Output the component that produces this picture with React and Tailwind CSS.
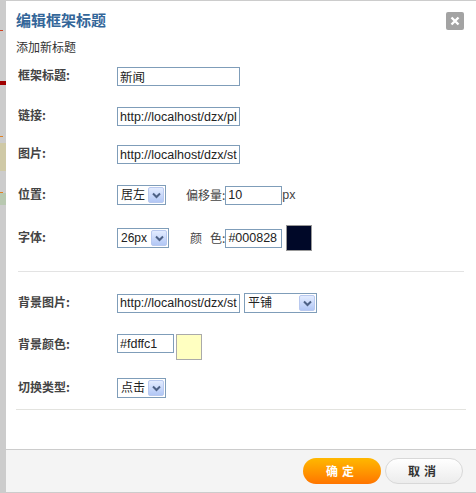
import React from 'react';

const cn = "font-['Noto_Sans_CJK_SC','Liberation_Sans',sans-serif]";
const latin = "font-['Liberation_Sans','Noto_Sans_CJK_SC',sans-serif]";

// fake XP-style dropdown
const Select = ({ label, width }) => (
  <div className={`flex items-center justify-between h-[20px] border border-[#7f9db9] bg-white pl-[3px] pr-[1px] ${width}`}>
    <span className={`text-[12px] leading-none text-[#222] ${latin}`}>{label}</span>
    <span className="flex items-center justify-center w-[16px] h-[16px] rounded-[2px] border border-[#b9c9ef] bg-gradient-to-b from-[#e3ecff] to-[#b2c7f5]">
      <svg width="9" height="7" viewBox="0 0 9 7">
        <path d="M1 1.5 L4.5 5 L8 1.5" stroke="#4d6185" strokeWidth="2" fill="none" />
      </svg>
    </span>
  </div>
);

const Input = ({ value, width }) => (
  <input
    readOnly
    defaultValue={value}
    className={`h-[19px] border border-[#7f9db9] bg-white px-[2px] text-[12.5px] text-[#222] outline-none ${latin} ${width}`}
  />
);

const Label = ({ children }) => (
  <div className={`w-[99px] shrink-0 -mt-[3px] text-[12px] font-bold text-[#444] ${cn}`}>{children}</div>
);

export default function App() {
  return (
    <div className="flex w-[476px] h-[493px] bg-white overflow-hidden">
      {/* page behind the dialog */}
      <div className="w-[6px] shrink-0 flex flex-col bg-[#cccccc]">
        <div className="h-[30px]" />
        <div className="h-[1px] w-[3px] bg-[#d04020]" />
        <div className="h-[50px]" />
        <div className="h-[4px] bg-[#a00000]" />
        <div className="h-[51px]" />
        <div className="h-[1px] w-[3px] bg-[#e08020]" />
        <div className="h-[6px]" />
        <div className="h-[28px] bg-[#cfc9a6]" />
        <div className="h-[21px]" />
        <div className="h-[1px] w-[3px] bg-[#e08020]" />
        <div className="h-[12px] bg-[#b8c8b0]" />
      </div>

      <div className="flex-1 flex flex-col border-t border-[#cccccc]">
        <div className="flex items-start justify-between pl-[10px] pr-[12px] pt-[9px]">
          <h1 className={`text-[15px] leading-[20px] font-bold text-[#336699] ${cn}`}>编辑框架标题</h1>
          <button className="mt-[2px] flex items-center justify-center w-[18px] h-[18px] rounded-[2px] bg-[#a3a3a3]">
            <svg width="10" height="10" viewBox="0 0 10 10">
              <path d="M1.5 1.5 L8.5 8.5 M8.5 1.5 L1.5 8.5" stroke="white" strokeWidth="2.4" />
            </svg>
          </button>
        </div>
        <p className={`pl-[10px] mt-[9px] text-[12px] leading-[16px] text-[#333] ${cn}`}>添加新标题</p>

        <div className="flex flex-col pl-[12px]">
          <div className="flex items-center mt-[12px]">
            <Label>框架标题:</Label>
            <Input value="新闻" width="w-[123px]" />
          </div>
          <div className="flex items-center mt-[21px]">
            <Label>链接:</Label>
            <Input value="http://localhost/dzx/plugin.php" width="w-[123px]" />
          </div>
          <div className="flex items-center mt-[19px]">
            <Label>图片:</Label>
            <Input value="http://localhost/dzx/static/image" width="w-[123px]" />
          </div>
          <div className="flex items-center mt-[21px]">
            <Label>位置:</Label>
            <Select label="居左" width="w-[49px]" />
            <span className={`ml-[20px] text-[12px] text-[#444] ${cn}`}>偏移量:</span>
            <Input value="10" width="w-[57px]" />
            <span className={`text-[12.5px] text-[#444] ${latin}`}>px</span>
          </div>
          <div className="flex items-center mt-[20px]">
            <Label>字体:</Label>
            <Select label="26px" width="w-[52px]" />
            <span className={`ml-[21px] text-[12px] text-[#444] ${cn}`}>颜&nbsp;&nbsp;&nbsp;色:</span>
            <Input value="#000828" width="w-[57px]" />
            <div className="ml-[4px] w-[26px] h-[26px] border border-[#999] bg-[#000828]" />
          </div>
        </div>

        <div className="mx-[12px] mt-[20px] h-px bg-[#e3e3e3]" />

        <div className="flex flex-col pl-[12px]">
          <div className="flex items-center mt-[21px]">
            <Label>背景图片:</Label>
            <Input value="http://localhost/dzx/static/image" width="w-[123px]" />
            <div className="ml-[4px]">
              <Select label="平铺" width="w-[73px]" />
            </div>
          </div>
          <div className="flex items-start mt-[21px]">
            <div className="pt-[4px]"><Label>背景颜色:</Label></div>
            <Input value="#fdffc1" width="w-[57px]" />
            <div className="ml-[2px] w-[26px] h-[26px] border border-[#aaa] bg-[#ffffc1]" />
          </div>
          <div className="flex items-center mt-[18px]">
            <Label>切换类型:</Label>
            <Select label="点击" width="w-[49px]" />
          </div>
        </div>

        <div className="ml-[10px] mr-[10px] mt-[11px] h-px bg-[#e3e3df]" />

        <div className="flex-1" />

        <div className="h-[44px] flex items-center justify-end gap-[4px] pr-[13px] bg-[#f4f4f4] border-t border-[#cccccc] border-b">
          <button className={`w-[78px] h-[26px] rounded-full bg-gradient-to-b from-[#ffb800] to-[#ff7400] text-white text-[12px] font-bold tracking-[4px] ${cn}`}>
            确定
          </button>
          <button className={`w-[78px] h-[26px] rounded-full border border-[#d8d8d8] bg-gradient-to-b from-white to-[#ececec] text-[#333] text-[12px] font-bold tracking-[4px] ${cn}`}>
            取消
          </button>
        </div>
      </div>
    </div>
  );
}
